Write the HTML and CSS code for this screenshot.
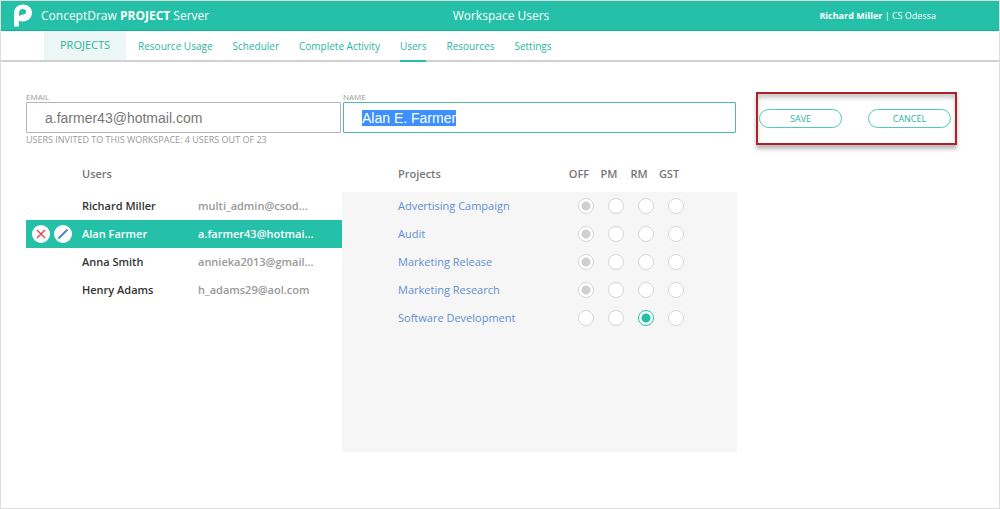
FILE: index.html
```html
<!DOCTYPE html>
<html lang="en">
<head>
<meta charset="utf-8">
<meta name="viewport" content="width=device-width, initial-scale=1">
<title>Workspace Users</title>
<link rel="stylesheet" href="styles.css">
</head>
<body>
<header class="topbar">
  <div class="brand">
    <svg class="logo" viewBox="0 0 18 23" aria-hidden="true"><path class="logo-fill" fill-rule="evenodd" d="M0 22.500V9.500C0 4 3.600.500 9 .500c5.300 0 9 3.600 9 8.300 0 4.900-3.700 8.700-9.500 8.700-1.300 0-2.700-.300-3.700-.700v5.700zM5 13.500c0-2 1.300-2.500 3.600-2.800 2.200-.300 3.600-1 3.600-2.900 0-1.700-1.400-2.900-3.400-2.900C6.200 4.900 5 6.800 5 9.500z"/></svg>
    <span class="brand-name">ConceptDraw <strong>PROJECT</strong> Server</span>
  </div>
  <h1 class="page-title">Workspace Users</h1>
  <div class="account"><strong>Richard Miller</strong> | CS Odessa</div>
</header>
<nav class="nav">
  <a class="nav-home" href="#projects">PROJECTS</a>
  <a class="nav-link" href="#usage">Resource Usage</a>
  <a class="nav-link" href="#scheduler">Scheduler</a>
  <a class="nav-link" href="#activity">Complete Activity</a>
  <a class="nav-link current" href="#users" aria-current="page">Users</a>
  <a class="nav-link" href="#resources">Resources</a>
  <a class="nav-link" href="#settings">Settings</a>
</nav>
<main class="workspace">
  <form class="editor">
    <div class="field">
      <label for="email">EMAIL</label>
      <input id="email" type="text" value="a.farmer43@hotmail.com">
      <p class="hint">USERS INVITED TO THIS WORKSPACE: 4 USERS OUT OF 23</p>
    </div>
    <div class="field">
      <label for="name">NAME</label>
      <input id="name" type="text" value="Alan E. Farmer">
    </div>
    <div class="actions">
      <button type="submit">SAVE</button>
      <button type="button">CANCEL</button>
    </div>
  </form>
  <div class="lists">
    <table class="users">
      <thead><tr><th class="tools"></th><th class="person">Users</th><th></th></tr></thead>
      <tbody>
        <tr><td></td><td>Richard Miller</td><td class="mail">multi_admin@csod...</td></tr>
        <tr class="selected">
          <td><div class="row-tools">
            <button type="button" aria-label="Delete user"><svg viewBox="0 0 18 18"><path class="cross" d="M5 5l8 8M13 5l-8 8"/></svg></button>
            <button type="button" aria-label="Edit user"><svg viewBox="0 0 18 18"><path class="pencil" d="M4.500 13.500L13.500 4.500"/><path class="pencil-tip" d="M3.500 14.500l2-2"/></svg></button>
          </div></td>
          <td>Alan Farmer</td><td class="mail">a.farmer43@hotmai...</td>
        </tr>
        <tr><td></td><td>Anna Smith</td><td class="mail">annieka2013@gmail...</td></tr>
        <tr><td></td><td>Henry Adams</td><td class="mail">h_adams29@aol.com</td></tr>
      </tbody>
    </table>
    <section class="panel">
      <table class="projects">
        <thead><tr><th class="project">Projects</th><th class="role">OFF</th><th class="role">PM</th><th class="role">RM</th><th class="role">GST</th><th></th></tr></thead>
        <tbody>
          <tr><td><a href="#p1">Advertising Campaign</a></td><td><input type="radio" name="p1" aria-label="OFF" checked></td><td><input type="radio" name="p1" aria-label="PM"></td><td><input type="radio" name="p1" aria-label="RM"></td><td><input type="radio" name="p1" aria-label="GST"></td><td></td></tr>
          <tr><td><a href="#p2">Audit</a></td><td><input type="radio" name="p2" aria-label="OFF" checked></td><td><input type="radio" name="p2" aria-label="PM"></td><td><input type="radio" name="p2" aria-label="RM"></td><td><input type="radio" name="p2" aria-label="GST"></td><td></td></tr>
          <tr><td><a href="#p3">Marketing Release</a></td><td><input type="radio" name="p3" aria-label="OFF" checked></td><td><input type="radio" name="p3" aria-label="PM"></td><td><input type="radio" name="p3" aria-label="RM"></td><td><input type="radio" name="p3" aria-label="GST"></td><td></td></tr>
          <tr><td><a href="#p4">Marketing Research</a></td><td><input type="radio" name="p4" aria-label="OFF" checked></td><td><input type="radio" name="p4" aria-label="PM"></td><td><input type="radio" name="p4" aria-label="RM"></td><td><input type="radio" name="p4" aria-label="GST"></td><td></td></tr>
          <tr><td><a href="#p5">Software Development</a></td><td><input type="radio" name="p5" aria-label="OFF"></td><td><input type="radio" name="p5" aria-label="PM"></td><td><input type="radio" class="granted" name="p5" aria-label="RM" checked></td><td><input type="radio" name="p5" aria-label="GST"></td><td></td></tr>
        </tbody>
      </table>
    </section>
  </div>
</main>
<script src="script.js"></script>
</body>
</html>
```
FILE: styles.css
```css
* { box-sizing: border-box; }
body {
  margin: 0;
  min-height: 100vh;
  border: 1px solid #dedede;
  background: #fff;
  color: #777;
  font-family: "Open Sans", "Noto Sans", sans-serif;
  font-size: 11px;
  line-height: 16px;
}
table { border-collapse: collapse; table-layout: fixed; width: 100%; }
th, td { padding: 0; text-align: left; }
a { text-decoration: none; }

.topbar {
  display: grid;
  grid-template-columns: 1fr auto 1fr;
  align-items: center;
  height: 30px;
  padding: 0 63px 0 13px;
  background: #24c0a8;
  border-bottom: 1px solid #12ae95;
  color: #fff;
}
.brand { display: flex; align-items: center; gap: 9px; }
.logo { width: 18px; height: 23px; }
.logo-fill { fill: #fff; }
.brand-name { font-size: 12px; }
.page-title { margin: 0; padding-left: 52px; font-size: 12px; font-weight: 400; }
.account { text-align: right; font-size: 9px; }

.nav {
  display: flex;
  height: 31px;
  padding-left: 43px;
  border-bottom: 2px solid #d0d0d0;
}
.nav a { color: #29b59f; font-size: 10px; line-height: 30px; }
.nav-home { margin-right: 12px; padding: 0 16px; background: #ecf6f5; }
.nav .nav-home { font-size: 11px; line-height: 28px; }
.nav-link { margin-right: 20px; height: 31px; }
.current { border-bottom: 2px solid #24c0a8; }

.workspace { padding: 30px 0 0 25px; }
.editor, .lists { display: grid; grid-template-columns: 316fr 395fr 262fr; }
.editor { align-items: start; }
.field { padding-right: 1px; }
.field + .field { padding-left: 1px; }
.field label { display: block; font-size: 8px; line-height: 10px; color: #999; }
.field input {
  display: block;
  width: 100%;
  height: 31px;
  padding: 0 18px;
  border: 1px solid #b5b5b5;
  border-radius: 1px;
  outline: 0;
  color: #777;
  font: 14px "Liberation Sans", Arial, sans-serif;
}
.field input:focus { border-color: #4fb9a6; }
.field input::selection { background: #3d90ff; color: #fff; }
.hint { margin: 1px 0 0; font-size: 9px; line-height: 12px; color: #999; }
.actions {
  display: flex;
  justify-content: space-between;
  align-items: center;
  height: 53px;
  margin: 0 42px 0 19px;
  padding: 0 4px 0 1px;
  border: 2px solid #ad2228;
  box-shadow: 0 4px 4px #bbb, inset 0 4px 4px #ccc;
}
.actions button {
  width: 83px;
  height: 19px;
  padding: 0;
  border: 1px solid #51cbb8;
  border-radius: 10px;
  background: #fff;
  color: #29b59f;
  font: 9px "Open Sans", sans-serif;
}

.lists { align-items: start; margin-top: 9px; }
.lists th { height: 37px; font-weight: 600; background: #fff; }
.lists td { height: 28px; }
.users { color: #333; font-weight: 600; }
.tools { width: 56px; }
.person { width: 116px; color: #777; }
.users .mail { color: #999; }
.users .selected { background: #24c0a8; color: #fff; }
.users .selected .mail { color: #fff; }
.row-tools { display: flex; gap: 4px; padding-left: 6px; }
.row-tools button {
  width: 18px;
  height: 18px;
  padding: 0;
  border: 0;
  border-radius: 50%;
  background: #fff;
}
.row-tools svg { display: block; width: 18px; height: 18px; }
.cross { fill: none; stroke: #e24b4b; stroke-width: 1.500; }
.pencil { stroke: #4d86d0; stroke-width: 2; }
.pencil-tip { stroke: #7fa7dd; stroke-width: 1; }

.panel { min-height: 297px; background: #f6f6f6; }
.project { width: 222px; }
.projects .project, .projects td:first-child { padding-left: 56px; }
.projects a { color: #6290d2; font-size: 11px; }
.projects .role { width: 30px; text-align: center; }
.projects input {
  appearance: none;
  display: block;
  width: 16px;
  height: 16px;
  margin: 0 0 0 14px;
  border: 1px solid #d8d8d8;
  border-radius: 50%;
  background: #fff;
}
.projects input:checked { background: radial-gradient(circle, #cfcfcf 4px, #fff 5px); }
.projects .granted:checked { border-color: #24c0a8; background: radial-gradient(circle, #24c0a8 4px, #fff 5px); }
```
FILE: script.js
```js
const nameField = document.getElementById("name");
nameField.focus();
nameField.select();
```
